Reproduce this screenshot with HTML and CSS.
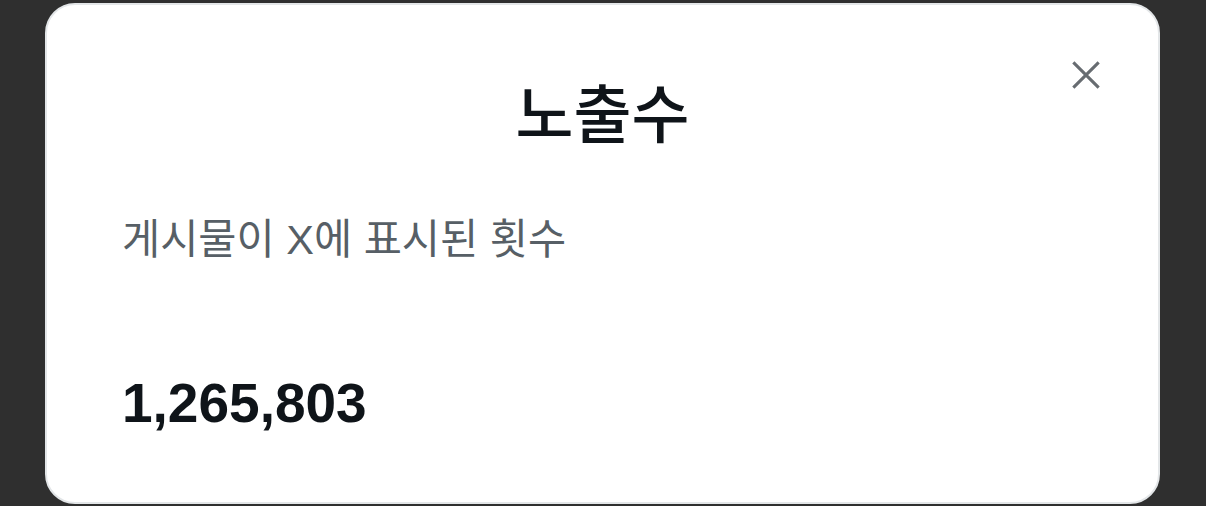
FILE: index.html
```html
<!DOCTYPE html>
<html lang="ko">
<head>
    <meta charset="UTF-8">
    <meta name="viewport" content="width=device-width, initial-scale=1.0">
    <title>노출수</title>
    <link rel="stylesheet" href="styles.css">
</head>
<body>
    <div class="sheet">
        <header class="sheet-head">
            <h1>노출수</h1>
            <button class="close-button" aria-label="닫기">
                <svg viewBox="0 0 24 24" width="32" height="32" aria-hidden="true">
                    <path d="M2.5 2.5 L21.5 21.5 M21.5 2.5 L2.5 21.5" />
                </svg>
            </button>
        </header>

        <p class="sheet-desc">게시물이 X에 표시된 횟수</p>

        <div class="sheet-count">1,265,803</div>
    </div>
</body>
</html>
```

FILE: styles.css
```css
/* Global Styles */
body {
    margin: 0;
    padding: 3px 0 0 45px;
    background: #2f2f2f;
    font-family: "Liberation Sans", "Noto Sans CJK KR", sans-serif;
    color: #0f1419;
    height: 506px;
    box-sizing: border-box;
    overflow: hidden;
}

/* Sheet */
.sheet {
    width: 1115px;
    height: 501px;
    box-sizing: border-box;
    background: #fff;
    border: 2px solid #e3e6e8;
    border-radius: 30px;
    padding: 0 75px;
}

.sheet-head {
    display: grid;
    grid-template-columns: 1fr auto 1fr;
    align-items: start;
    padding-top: 60px;
}

.sheet-head h1 {
    grid-column: 2;
    margin: 0;
    font-family: "Noto Sans CJK KR", sans-serif;
    font-size: 63px;
    font-weight: 500;
    line-height: 90px;
}

.close-button {
    grid-column: 3;
    justify-self: end;
    margin: -6px -19px 0 0;
    padding: 0;
    width: 32px;
    height: 32px;
    display: flex;
    align-items: center;
    justify-content: center;
    background: none;
    border: none;
    cursor: pointer;
}

.close-button path {
    fill: none;
    stroke: #676c71;
    stroke-width: 2.3;
}

.sheet-desc {
    margin: 60px 0 0;
    font-size: 41.5px;
    line-height: 50px;
    color: #575f66;
}

.sheet-count {
    margin-top: 108px;
    font-size: 55px;
    font-weight: 700;
    line-height: 60px;
}
```
